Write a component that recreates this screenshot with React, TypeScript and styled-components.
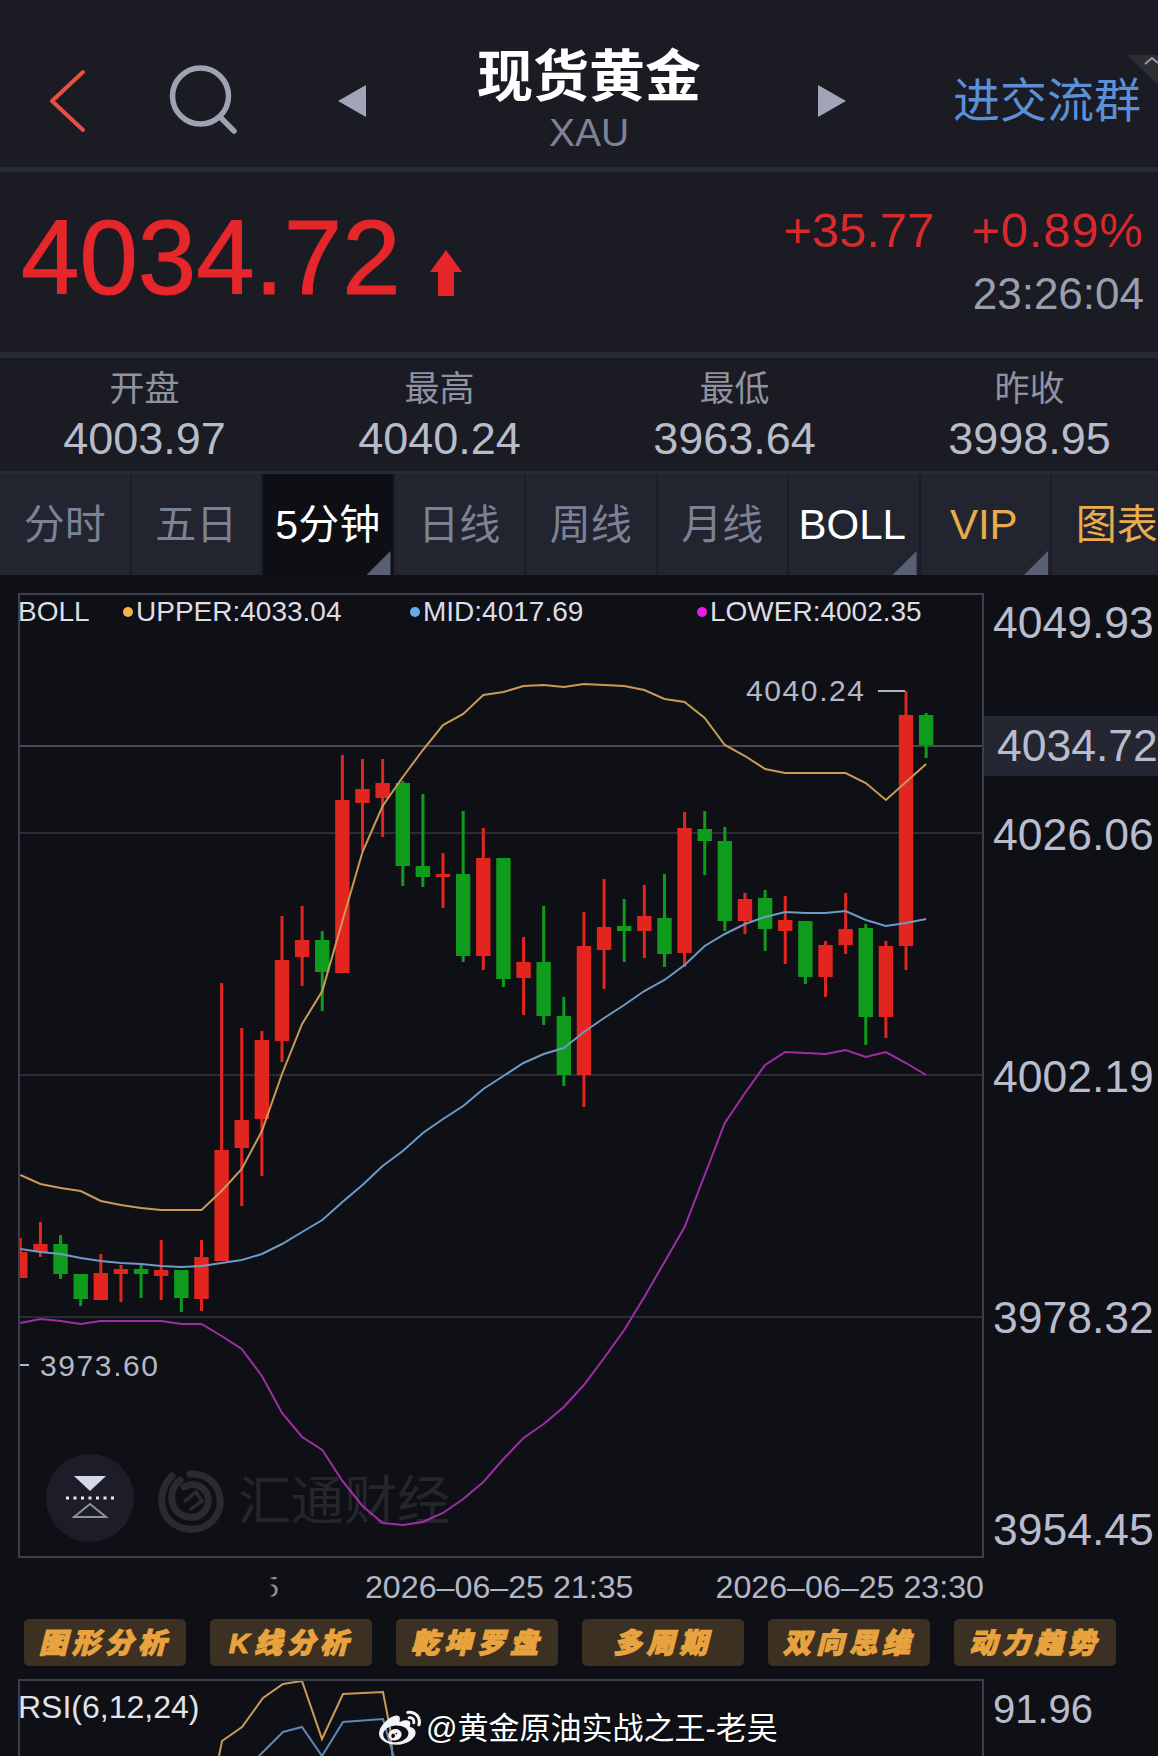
import React from 'react';
import styled, { createGlobalStyle } from 'styled-components';
import { FaWeibo } from 'react-icons/fa';

const GlobalStyle = createGlobalStyle`
    html, body {
        margin: 0;
        padding: 0;
        background: #0f1015;
    }
    * {
        box-sizing: border-box;
    }
`;

const Page = styled.div`
    position: relative;
    width: 1158px;
    height: 1756px;
    overflow: hidden;
    background: #0f1015;
    font-family: "Liberation Sans", "Noto Sans CJK SC", sans-serif;
`;

const Header = styled.header`
    position: relative;
    display: grid;
    grid-template-columns: 150px 170px 60px 418px 102px 1fr;
    align-items: center;
    height: 172px;
    padding-top: 34px;
    background: #1a1b23;
    border-bottom: 5px solid #262a33;
`;

const IconCell = styled.div<{ $pad: number }>`
    display: flex;
    padding-left: ${p => p.$pad}px;
`;

const TitleBlock = styled.div`
    display: flex;
    flex-direction: column;
    align-items: center;
`;

const Title = styled.div`
    color: #fff;
    font-size: 56px;
    font-weight: 700;
    line-height: 62px;
`;

const Symbol = styled.div`
    margin-top: 3px;
    color: #7e8296;
    font-size: 39px;
    line-height: 44px;
`;

const JoinLink = styled.a`
    color: #5b8fd6;
    font-size: 47px;
    line-height: 56px;
    padding-left: 53px;
    white-space: nowrap;
`;

const CornerMark = styled.svg`
    position: absolute;
    right: 0;
    top: 55px;
`;

const PriceBlock = styled.section`
    display: flex;
    justify-content: space-between;
    height: 186px;
    padding: 0 14px 0 21px;
    background: #1a1b23;
    border-bottom: 6px solid #262a33;
`;

const PriceMain = styled.div`
    display: flex;
    align-items: flex-end;
    gap: 29px;
    padding-top: 27px;
    align-self: flex-start;
`;

const BigPrice = styled.div`
    color: #e5262a;
    font-size: 105px;
    line-height: 118px;
    -webkit-text-stroke: 1px #e5262a;
`;

const UpArrow = styled.svg`
    margin-bottom: 21px;
`;

const PriceSide = styled.div`
    display: flex;
    flex-direction: column;
    align-items: flex-end;
    padding-top: 28px;
`;

const ChangeRow = styled.div`
    display: flex;
    gap: 37px;
    color: #d8292c;
    font-size: 49px;
    line-height: 60px;
`;

const Percent = styled.span`
    letter-spacing: 0.8px;
`;

const TimeStamp = styled.div`
    color: #9a9fae;
    font-size: 44px;
    line-height: 68px;
`;

const Stats = styled.section`
    display: grid;
    grid-template-columns: repeat(4, 295px);
    width: 1161px;
    height: 116px;
    margin-left: -3px;
    padding-top: 6px;
    border-bottom: 3px solid #262a33;
    background: #1a1b23;
`;

const Stat = styled.div`
    display: flex;
    flex-direction: column;
    align-items: center;
`;

const StatLabel = styled.div`
    color: #8f93a1;
    font-size: 35px;
    line-height: 50px;
`;

const StatValue = styled.div`
    color: #b8bcc9;
    font-size: 45px;
    line-height: 50px;
`;

const Tabs = styled.nav`
    display: grid;
    grid-template-columns: repeat(9, 131.5px);
    height: 101px;
    background: #22242f;
    overflow: hidden;
`;

const Tab = styled.div<{ $active?: boolean; $color?: string; $corner?: boolean; $latin?: boolean }>`
    position: relative;
    display: flex;
    align-items: center;
    justify-content: center;
    padding-bottom: ${p => (p.$latin ? 0 : 8)}px;
    padding-right: ${p => (p.$latin ? 3 : 0)}px;
    background: ${p => (p.$active ? '#0e0f14' : 'transparent')};
    color: ${p => p.$color || '#7c8296'};
    border-right: 2px solid #1b1c24;
    font-size: ${p => (p.$latin ? 42 : 41)}px;
    white-space: nowrap;

    &::after {
        content: '';
        display: ${p => (p.$corner ? 'block' : 'none')};
        position: absolute;
        right: 2px;
        bottom: 0;
        width: 24px;
        height: 24px;
        background: #596074;
        clip-path: polygon(100% 0, 100% 100%, 0 100%);
    }
`;

const ChartRow = styled.div`
    display: flex;
    padding: 18px 0 0 18px;
`;

const ChartFrame = styled.div`
    position: relative;
    width: 966px;
    height: 965px;
    border: 2px solid #3c3e4d;
`;

const ChartSvg = styled.svg`
    position: relative;
    z-index: 1;
    display: block;
`;

const ChartText = styled.text`
    fill: #b4b7c6;
    font-size: 30px;
    letter-spacing: 1.6px;
    font-family: "Liberation Sans", sans-serif;
`;

const Legend = styled.div`
    position: absolute;
    z-index: 2;
    left: -2px;
    top: 1px;
    display: grid;
    grid-template-columns: 105px repeat(3, 287px);
    color: #dcdde5;
    font-size: 28px;
    line-height: 32px;
    white-space: nowrap;
`;

const LegendItem = styled.div<{ $dot: string }>`
    display: flex;
    align-items: center;
    gap: 3px;

    &::before {
        content: '';
        width: 10px;
        height: 10px;
        border-radius: 50%;
        background: ${p => p.$dot};
    }
`;

const Watermark = styled.div`
    position: absolute;
    left: 138px;
    bottom: 21px;
    display: flex;
    align-items: center;
    gap: 14px;
    color: #25262c;
    font-size: 53px;
    line-height: 66px;
`;

const ExpandButton = styled.div`
    position: absolute;
    z-index: 2;
    left: 26px;
    bottom: 14px;
    display: flex;
    align-items: center;
    justify-content: center;
    width: 88px;
    height: 88px;
    border-radius: 50%;
    background: #1c1d28;
`;

const Axis = styled.div`
    display: flex;
    flex-direction: column;
    width: 174px;
    flex: none;
`;

const AxisLabel = styled.div<{ $gap?: number }>`
    height: 60px;
    margin-top: ${p => p.$gap || 0}px;
    padding-left: 9px;
    color: #b9bccd;
    font-size: 44.5px;
    line-height: 60px;
    white-space: nowrap;
`;

const AxisTag = styled(AxisLabel)`
    padding-left: 13px;
    background: #242632;
`;

const TimeRow = styled.div`
    display: flex;
    align-items: center;
    justify-content: flex-end;
    gap: 82px;
    width: 984px;
    height: 59px;
    padding-bottom: 5px;
    color: #b4b7c6;
    font-size: 32.2px;
    line-height: 40px;
    white-space: nowrap;
`;

const ErasedDigit = styled.div`
    margin-right: 4px;
    color: #8a8c97;
    font-size: 30px;
    line-height: 30px;
    filter: blur(0.7px);
    mask-image: linear-gradient(to right, transparent 45%, #000 65%);
`;

const ToolRow = styled.div`
    display: flex;
    gap: 24px;
    height: 47px;
    margin-left: 24px;
`;

const ToolButton = styled.div`
    display: flex;
    align-items: center;
    justify-content: center;
    width: 162px;
    padding-bottom: 4px;
    border-radius: 5px;
    background: #3c3022;
    color: #e8a23e;
    font-size: 28px;
    font-weight: 900;
    font-style: italic;
    letter-spacing: 5px;
    -webkit-text-stroke: 1.2px #e8a23e;
    white-space: nowrap;
`;

const RsiRow = styled.div`
    display: flex;
    margin: 13px 0 0 18px;
`;

const RsiFrame = styled.div`
    position: relative;
    width: 966px;
    height: 120px;
    border: 2px solid #3c3e4d;
    border-bottom: 0;
`;

const RsiSvg = styled.svg`
    display: block;
`;

const RsiLabel = styled.div`
    position: absolute;
    left: -2px;
    top: 4px;
    color: #e2e3ea;
    font-size: 32px;
    line-height: 44px;
`;

const RsiAxis = styled.div`
    padding: 6px 0 0 9px;
    color: #b9bccd;
    font-size: 40px;
    line-height: 48px;
`;

const WeiboMark = styled.div`
    position: absolute;
    z-index: 3;
    left: 379px;
    top: 1704px;
    display: flex;
    align-items: center;
    gap: 5px;
    color: #fff;
    font-size: 31px;
    line-height: 50px;
    white-space: nowrap;
    text-shadow: 0 1px 2px rgba(0, 0, 0, 0.5);
`;

type Candle = [number, number, number, number, 'r' | 'g'];

const candles: Candle[] = [
    [1238, 1252, 1278, 1278, 'r'], [1222, 1244, 1252, 1257, 'r'], [1235, 1244, 1274, 1279, 'g'],
    [1274, 1274, 1299, 1306, 'g'], [1254, 1273, 1300, 1300, 'r'], [1265, 1269, 1274, 1302, 'r'],
    [1265, 1269, 1274, 1298, 'g'], [1240, 1270, 1276, 1300, 'r'], [1270, 1270, 1298, 1312, 'g'],
    [1240, 1257, 1299, 1311, 'r'], [983, 1150, 1261, 1261, 'r'], [1028, 1120, 1148, 1206, 'r'],
    [1031, 1040, 1119, 1176, 'r'], [916, 960, 1041, 1062, 'r'], [906, 940, 957, 986, 'r'],
    [931, 940, 972, 1011, 'g'], [755, 800, 973, 973, 'r'], [759, 789, 803, 851, 'r'],
    [759, 783, 798, 837, 'r'], [781, 783, 866, 886, 'g'], [794, 866, 877, 887, 'g'],
    [853, 874, 877, 908, 'r'], [811, 874, 956, 962, 'g'], [828, 858, 956, 970, 'r'],
    [858, 858, 979, 987, 'g'], [937, 962, 978, 1015, 'r'], [906, 962, 1016, 1025, 'g'],
    [997, 1016, 1075, 1086, 'g'], [912, 946, 1075, 1107, 'r'], [879, 927, 950, 989, 'r'],
    [899, 926, 931, 962, 'g'], [885, 916, 931, 958, 'r'], [874, 918, 954, 967, 'g'],
    [812, 828, 953, 967, 'r'], [811, 829, 841, 875, 'g'], [827, 841, 921, 931, 'g'],
    [893, 899, 921, 934, 'r'], [890, 898, 929, 951, 'g'], [896, 920, 931, 964, 'r'],
    [921, 921, 977, 984, 'g'], [941, 945, 977, 997, 'r'], [893, 929, 945, 954, 'r'],
    [924, 928, 1017, 1045, 'g'], [941, 946, 1017, 1038, 'r'], [691, 715, 946, 970, 'r'],
    [713, 715, 745, 758, 'g'],
];

const upper = [
    1175, 1184, 1188, 1191, 1201, 1205, 1208, 1210, 1210, 1210, 1191, 1169, 1131, 1074, 1024, 991,
    921, 852, 806, 777, 750, 725, 714, 695, 692, 686, 685, 687, 684, 685, 686, 690, 699, 702, 718,
    745, 756, 769, 773, 773, 773, 773, 783, 800, 782, 764,
];

const mid = [
    1249, 1252, 1254, 1258, 1261, 1263, 1264, 1266, 1267, 1266, 1263, 1260, 1254, 1244, 1232, 1220,
    1202, 1185, 1166, 1151, 1133, 1119, 1106, 1089, 1076, 1063, 1054, 1048, 1032, 1018, 1005, 991,
    980, 965, 946, 934, 924, 917, 912, 913, 913, 911, 920, 926, 923, 919,
];

const lower = [
    1323, 1319, 1321, 1324, 1321, 1321, 1321, 1321, 1324, 1324, 1336, 1349, 1376, 1413, 1437, 1450,
    1481, 1506, 1523, 1525, 1522, 1513, 1499, 1482, 1459, 1438, 1424, 1407, 1385, 1358, 1330, 1297,
    1262, 1227, 1175, 1123, 1093, 1065, 1052, 1053, 1054, 1050, 1057, 1052, 1063, 1075,
];

const candleX = (i: number) => 20.3 + i * 20.13;
const toPoints = (ys: number[]) => ys.map((y, i) => `${candleX(i).toFixed(1)},${y}`).join(' ');

const gridLines = [
    { y: 746, color: '#474954' },
    { y: 833, color: '#2b2c35' },
    { y: 1075, color: '#2b2c35' },
    { y: 1317, color: '#2b2c35' },
];

const stats = [
    { label: '开盘', value: '4003.97' },
    { label: '最高', value: '4040.24' },
    { label: '最低', value: '3963.64' },
    { label: '昨收', value: '3998.95' },
];

const tools = ['图形分析', 'K线分析', '乾坤罗盘', '多周期', '双向思维', '动力趋势'];

const CandleMark: React.FC<{ candle: Candle; index: number }> = ({ candle, index }) => {
    const [wickTop, bodyTop, bodyBottom, wickBottom, dir] = candle;
    const x = candleX(index);
    const color = dir === 'r' ? '#e3251f' : '#0f9c1c';
    return (
        <g fill={color}>
            <rect x={x - 1.5} y={wickTop} width={3} height={wickBottom - wickTop} />
            <rect x={x - 7.2} y={bodyTop} width={14.4} height={bodyBottom - bodyTop} />
        </g>
    );
};

const App: React.FC = () => {
    return (
        <Page>
            <GlobalStyle />
            <Header>
                <IconCell $pad={47}>
                    <svg width="40" height="64" viewBox="0 0 40 64">
                        <path d="M36 3 L5 32 L36 61" fill="none" stroke="#e8503f" strokeWidth="4" strokeLinecap="round" strokeLinejoin="round" />
                    </svg>
                </IconCell>
                <IconCell $pad={18}>
                    <svg width="72" height="72" viewBox="0 0 72 72">
                        <circle cx="32.5" cy="31" r="28" fill="none" stroke="#9ea3b3" strokeWidth="5.5" />
                        <path d="M52 52 L66 66" stroke="#9ea3b3" strokeWidth="5.5" strokeLinecap="round" />
                    </svg>
                </IconCell>
                <IconCell $pad={17}>
                    <svg width="30" height="34" viewBox="0 0 30 34">
                        <path d="M1 17 L29 1 V33 Z" fill="#a0a6b8" />
                    </svg>
                </IconCell>
                <TitleBlock>
                    <Title>现货黄金</Title>
                    <Symbol>XAU</Symbol>
                </TitleBlock>
                <IconCell $pad={19}>
                    <svg width="30" height="34" viewBox="0 0 30 34">
                        <path d="M29 17 L1 1 V33 Z" fill="#a0a6b8" />
                    </svg>
                </IconCell>
                <JoinLink>进交流群</JoinLink>
                <CornerMark width="31" height="30" viewBox="0 0 31 30">
                    <path d="M0 0 H31 V30 Z" fill="#2d2e34" />
                    <path d="M18 9 L25 3 L31 8" fill="none" stroke="#9a9ba0" strokeWidth="2" />
                </CornerMark>
            </Header>

            <PriceBlock>
                <PriceMain>
                    <BigPrice>4034.72</BigPrice>
                    <UpArrow width="32" height="46" viewBox="0 0 32 46">
                        <path d="M16 0 L32 22 H24 V46 H8 V22 H0 Z" fill="#e5262a" />
                    </UpArrow>
                </PriceMain>
                <PriceSide>
                    <ChangeRow>
                        <span>+35.77</span>
                        <Percent>+0.89%</Percent>
                    </ChangeRow>
                    <TimeStamp>23:26:04</TimeStamp>
                </PriceSide>
            </PriceBlock>

            <Stats>
                {stats.map(s => (
                    <Stat key={s.label}>
                        <StatLabel>{s.label}</StatLabel>
                        <StatValue>{s.value}</StatValue>
                    </Stat>
                ))}
            </Stats>

            <Tabs>
                <Tab>分时</Tab>
                <Tab>五日</Tab>
                <Tab $active $color="#fff" $corner>5分钟</Tab>
                <Tab>日线</Tab>
                <Tab>周线</Tab>
                <Tab>月线</Tab>
                <Tab $color="#fff" $corner $latin>BOLL</Tab>
                <Tab $color="#e8ab4e" $corner $latin>VIP</Tab>
                <Tab $color="#e8ab4e">图表</Tab>
            </Tabs>

            <ChartRow>
                <ChartFrame>
                    <Legend>
                        <div>BOLL</div>
                        <LegendItem $dot="#f2b451">UPPER:4033.04</LegendItem>
                        <LegendItem $dot="#66aef2">MID:4017.69</LegendItem>
                        <LegendItem $dot="#e51ee8">LOWER:4002.35</LegendItem>
                    </Legend>
                    <Watermark>
                        <svg width="66" height="64" viewBox="0 0 66 64" fill="none" stroke="#2a2b31" strokeLinecap="round">
                            <path d="M14 6 C-4 24 2 56 30 59 C52 61 64 44 62 28 C60 12 46 3 32 4" strokeWidth="7" />
                            <path d="M22 10 C8 22 12 44 30 47 C44 49 52 38 50 27 C48 17 36 11 26 17" strokeWidth="7" />
                            <path d="M27 31 L38 22 L44 31 L33 39" strokeWidth="3.5" />
                        </svg>
                        <span>汇通财经</span>
                    </Watermark>
                    <ChartSvg width="962" height="961" viewBox="20 595 962 961">
                        {gridLines.map(l => (
                            <rect key={l.y} x={20} y={l.y - 1} width={962} height={2} fill={l.color} />
                        ))}
                        {candles.map((c, i) => (
                            <CandleMark key={i} candle={c} index={i} />
                        ))}
                        <polyline points={toPoints(upper)} fill="none" stroke="#c99b57" strokeWidth="2" />
                        <polyline points={toPoints(mid)} fill="none" stroke="#6d9ac6" strokeWidth="2" />
                        <polyline points={toPoints(lower)} fill="none" stroke="#a12ca9" strokeWidth="2" />
                        <rect x={878} y={690} width={27} height={2} fill="#b4b7c6" />
                        <ChartText x={746} y={701}>4040.24</ChartText>
                        <rect x={20} y={1364} width={9} height={2} fill="#b4b7c6" />
                        <ChartText x={40} y={1376}>3973.60</ChartText>
                    </ChartSvg>
                    <ExpandButton>
                        <svg width="50" height="44" viewBox="0 0 50 44">
                            <path d="M9 0 H41 L25 15 Z" fill="#d5d8ea" />
                            <path d="M1 22 H49" stroke="#e6e8f0" strokeWidth="3" strokeDasharray="3 4.5" />
                            <path d="M9 41 L25 28 L41 41 Z" fill="none" stroke="#8e909c" strokeWidth="2" />
                        </svg>
                    </ExpandButton>
                </ChartFrame>
                <Axis>
                    <AxisLabel $gap={0}>4049.93</AxisLabel>
                    <AxisTag $gap={63}>4034.72</AxisTag>
                    <AxisLabel $gap={29}>4026.06</AxisLabel>
                    <AxisLabel $gap={182}>4002.19</AxisLabel>
                    <AxisLabel $gap={181}>3978.32</AxisLabel>
                    <AxisLabel $gap={152}>3954.45</AxisLabel>
                </Axis>
            </ChartRow>

            <TimeRow>
                <ErasedDigit>5</ErasedDigit>
                <span>2026–06–25 21:35</span>
                <span>2026–06–25 23:30</span>
            </TimeRow>

            <ToolRow>
                {tools.map(t => (
                    <ToolButton key={t}>{t}</ToolButton>
                ))}
            </ToolRow>

            <RsiRow>
                <RsiFrame>
                    <RsiLabel>RSI(6,12,24)</RsiLabel>
                    <RsiSvg width="962" height="118" viewBox="20 1680 962 118">
                        <polyline points="218,1760 222,1740 242,1726 263,1697 283,1683 302,1680 322,1738 343,1693 383,1691 390,1727 393,1760" fill="none" stroke="#c99b57" strokeWidth="2" />
                        <polyline points="254,1760 262,1752 283,1731 302,1726 322,1755 343,1721 383,1718 395,1760" fill="none" stroke="#5d88b8" strokeWidth="2" />
                    </RsiSvg>
                </RsiFrame>
                <RsiAxis>91.96</RsiAxis>
            </RsiRow>

            <WeiboMark>
                <FaWeibo size={42} color="#f4f4f6" />
                <span>@黄金原油实战之王-老吴</span>
            </WeiboMark>
        </Page>
    );
};

export default App;
